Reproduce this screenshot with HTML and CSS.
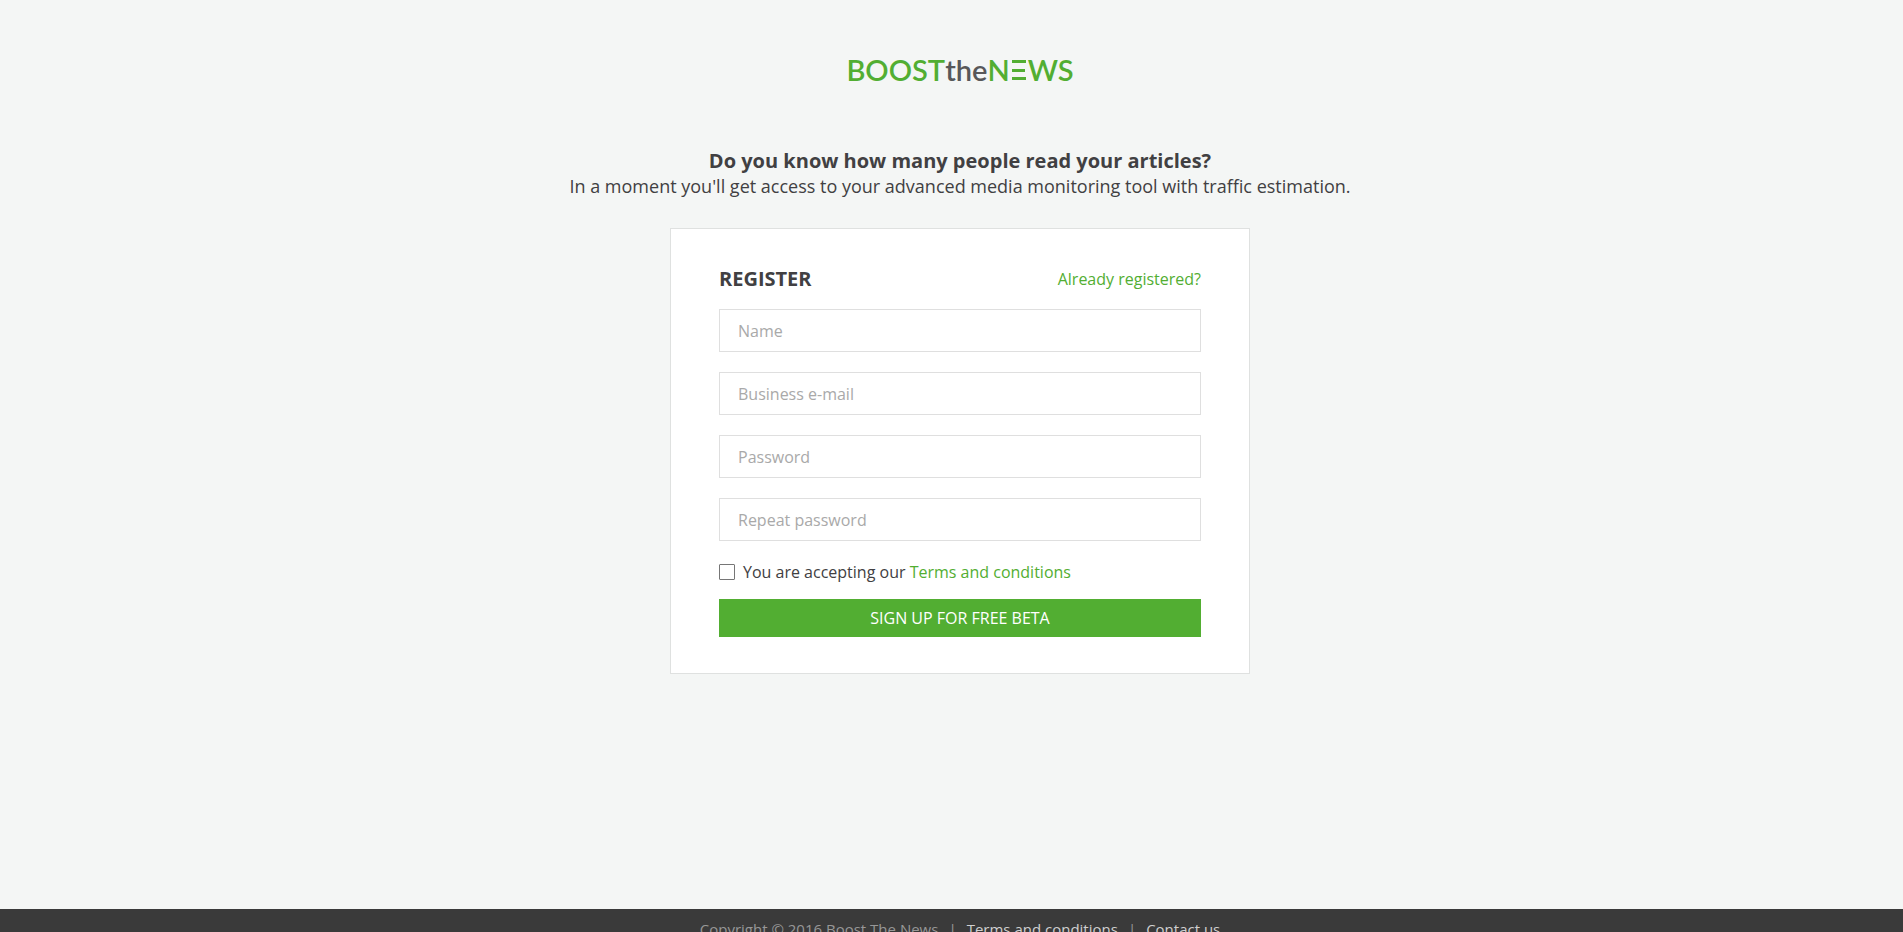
FILE: index.html
```html
<!DOCTYPE html>
<html lang="en">
<head>
    <meta charset="UTF-8">
    <meta name="viewport" content="width=device-width, initial-scale=1.0">
    <title>Register - Boost The News</title>
    <link rel="stylesheet" href="styles.css">
</head>
<body>
    <main class="page">
        <a class="logo" href="#">
            <span>BOOST</span><span class="logo-the">the</span><span>N</span>
            <svg class="logo-bars" width="14" height="20" viewBox="0 0 14 20" aria-hidden="true">
                <path d="M0 0h14v3H0zM0 9h13v3H0zM0 17h14v3H0z" fill="#52ae32"/>
            </svg>
            <span>WS</span>
        </a>

        <header class="intro">
            <h1>Do you know how many people read your articles?</h1>
            <p>In a moment you'll get access to your advanced media monitoring tool with traffic estimation.</p>
        </header>

        <form class="card" action="#" method="post">
            <div class="card-head">
                <h2>REGISTER</h2>
                <a href="#">Already registered?</a>
            </div>

            <input class="field" type="text" name="name" placeholder="Name" aria-label="Name">
            <input class="field" type="email" name="email" placeholder="Business e-mail" aria-label="Business e-mail">
            <input class="field" type="password" name="password" placeholder="Password" aria-label="Password">
            <input class="field" type="password" name="password_repeat" placeholder="Repeat password" aria-label="Repeat password">

            <div class="terms">
                <input type="checkbox" id="terms" name="terms">
                <label for="terms">You are accepting our <a href="#">Terms and conditions</a></label>
            </div>

            <button class="btn" type="submit">SIGN UP FOR FREE BETA</button>
        </form>
    </main>

    <footer class="footer">
        <span>Copyright © 2016 Boost The News</span>
        <span>|</span>
        <a href="#">Terms and conditions</a>
        <span>|</span>
        <a href="#">Contact us</a>
    </footer>
</body>
</html>
```

FILE: styles.css
```css
* {
    box-sizing: border-box;
}

body {
    margin: 0;
    font-family: "Open Sans", sans-serif;
    font-size: 16px;
    line-height: 24px;
    color: #414042;
    background: #f4f6f5;
}

a {
    color: #52ae32;
    text-decoration: none;
}

h1,
h2,
p {
    margin: 0;
}

.page {
    display: flex;
    flex-direction: column;
    align-items: center;
    min-height: calc(100vh - 23px);
    padding: 53px 0 48px 17px;
}

/* Logo */
.logo {
    display: flex;
    align-items: center;
    font-family: Lato, sans-serif;
    font-size: 29px;
    font-weight: 600;
    line-height: 34px;
}

.logo-the {
    color: #58585a;
}

.logo-bars {
    margin: 0 2px;
}

.intro {
    margin-top: 61px;
    font-size: 18px;
    line-height: 24px;
    text-align: center;
}

.intro h1 {
    font-size: 20px;
    font-weight: 700;
    line-height: 26px;
}

/* Register form */
.card {
    width: 100%;
    max-width: 580px;
    margin-top: 30px;
    padding: 36px 48px;
    background: #fff;
    border: 1px solid #dfe1e0;
}

.card-head {
    display: flex;
    justify-content: space-between;
    align-items: center;
    margin-bottom: 16px;
    line-height: 28px;
}

.card-head h2 {
    font-size: 20px;
    font-weight: 700;
}

.field {
    display: block;
    width: 100%;
    height: 43px;
    margin-bottom: 20px;
    padding: 0 18px;
    font: inherit;
    color: inherit;
    background: #fff;
    border: 1px solid #dfdfdf;
    border-radius: 0;
}

.field::placeholder {
    color: #a9a9a9;
}

.terms {
    display: flex;
    align-items: center;
    gap: 8px;
    margin-bottom: 16px;
    line-height: 22px;
}

.terms input {
    appearance: none;
    width: 16px;
    height: 16px;
    margin: 0;
    background: #fff;
    border: 1px solid #767676;
    border-radius: 1px;
}

.terms input:checked {
    background: #52ae32;
    box-shadow: inset 0 0 0 2px #fff;
}

.btn {
    display: block;
    width: 100%;
    height: 38px;
    padding: 0;
    font: inherit;
    color: #fff;
    background: #52ae32;
    border: 0;
    cursor: pointer;
}

/* Footer */
.footer {
    display: flex;
    justify-content: center;
    gap: 10px;
    padding: 8px 0 8px 17px;
    font-size: 15px;
    color: #979797;
    background: #3a3a3a;
}

.footer a {
    color: #d0d0d0;
}
```
